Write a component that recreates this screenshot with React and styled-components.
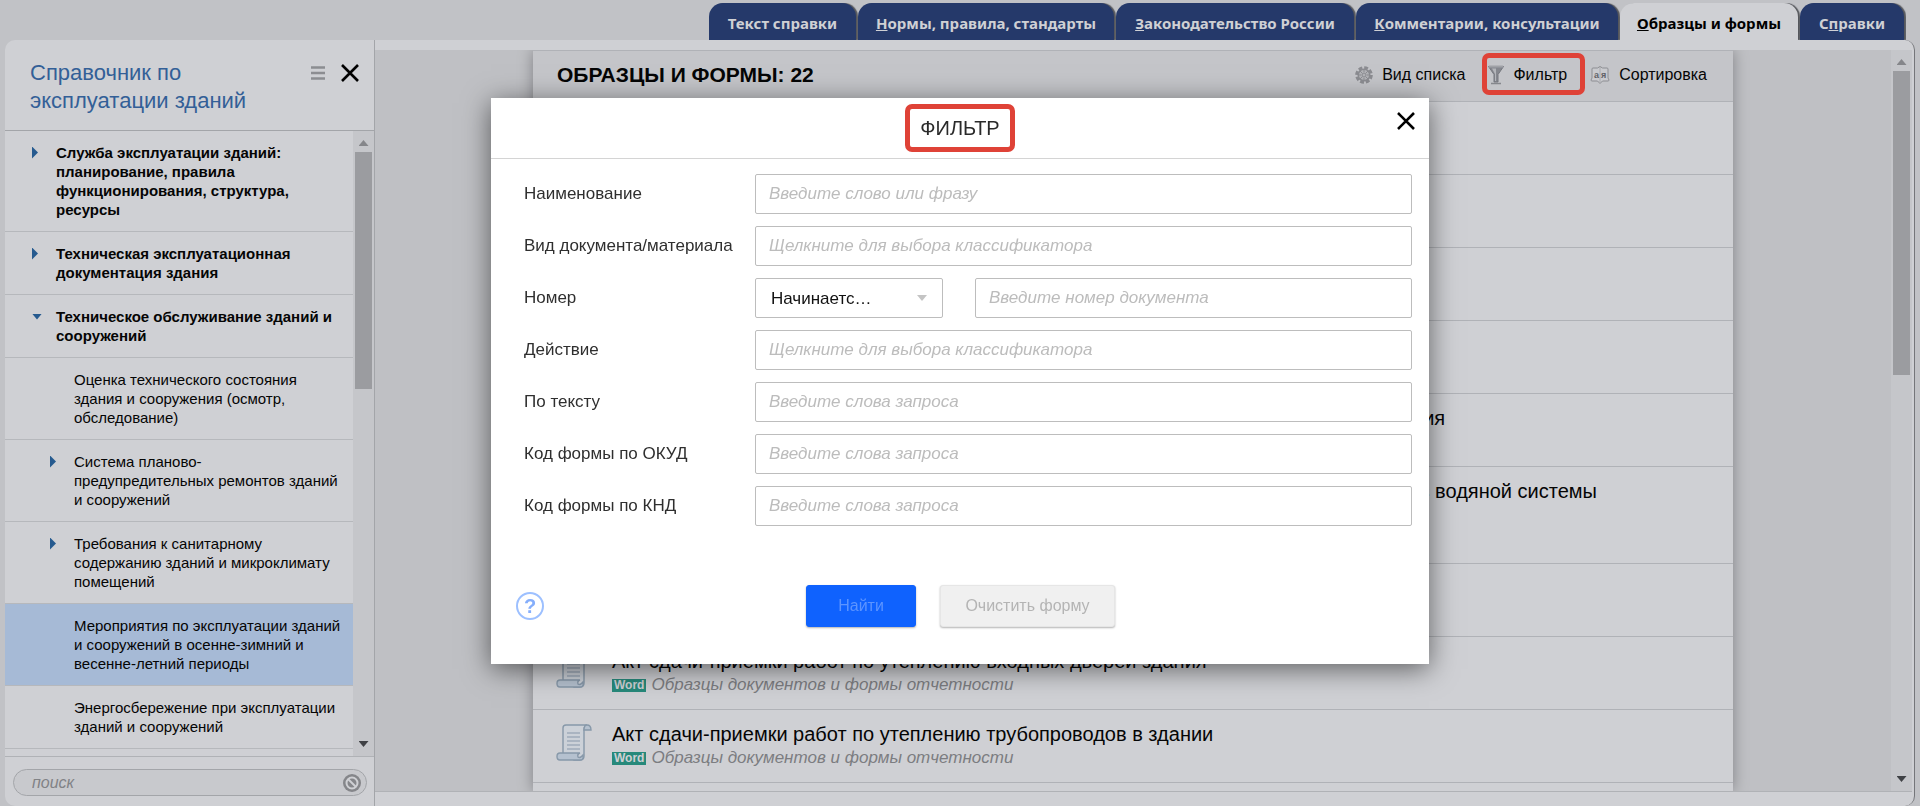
import React from 'react'
import styled, { createGlobalStyle } from 'styled-components'

const GlobalStyle = createGlobalStyle`
    *{
        box-sizing: border-box;
    }
    body{
        margin: 0;
        overflow: hidden;
        background: #c1c2c6;
        font-family: "Liberation Sans", Arial, sans-serif;
        color: #050505;
    }
    button, input, select{
        font-family: inherit;
    }
    h1, h2, ul, p{
        margin: 0;
        padding: 0;
    }
`

const tabs = [
    { before: 'Текст справки', width: 147 },
    { key: 'Н', after: 'ормы, правила, стандарты', width: 256 },
    { key: 'З', after: 'аконодательство России', width: 238 },
    { key: 'К', after: 'омментарии, консультации', width: 262 },
    { key: 'О', after: 'бразцы и формы', width: 178, active: true },
    { before: 'С', key: 'п', after: 'равки', width: 104 },
]

const sections = [
    { title: 'Служба эксплуатации зданий: планирование, правила функционирования, структура, ресурсы', level: 1, arrow: 'right' },
    { title: 'Техническая эксплуатационная документация здания', level: 1, arrow: 'right' },
    { title: 'Техническое обслуживание зданий и сооружений', level: 1, arrow: 'down' },
    { title: 'Оценка технического состояния здания и сооружения (осмотр, обследование)', level: 2 },
    { title: 'Система планово-предупредительных ремонтов зданий и сооружений', level: 2, arrow: 'right' },
    { title: 'Требования к санитарному содержанию зданий и микроклимату помещений', level: 2, arrow: 'right' },
    { title: 'Мероприятия по эксплуатации зданий и сооружений в осенне-зимний и весенне-летний периоды', level: 2, active: true },
    { title: 'Энергосбережение при эксплуатации зданий и сооружений', level: 2 },
]

const documents = [
    'План подготовки здания к зиме',
    'Паспорт готовности здания',
    'Акт готовности здания',
    'Акт весеннего осмотра здания',
    'Акт готовности сетей отопления и водоснабжения к эксплуатации в зимнее время здания',
    'Акты промывки и гидравлического испытания трубопроводов и отопительных приборов водяной системы отопления здания',
    'Акт осмотра кровли здания',
    'Акт сдачи-приемки работ по утеплению входных дверей здания',
    'Акт сдачи-приемки работ по утеплению трубопроводов в здании',
    'Акт сдачи-приемки работ по утеплению чердака',
]

const fields = [
    { id: 'name', label: 'Наименование', placeholder: 'Введите слово или фразу' },
    { id: 'kind', label: 'Вид документа/материала', placeholder: 'Щелкните для выбора классификатора' },
    { id: 'number', label: 'Номер', placeholder: 'Введите номер документа', select: true },
    { id: 'status', label: 'Действие', placeholder: 'Щелкните для выбора классификатора' },
    { id: 'text', label: 'По тексту', placeholder: 'Введите слова запроса' },
    { id: 'okud', label: 'Код формы по ОКУД', placeholder: 'Введите слова запроса' },
    { id: 'knd', label: 'Код формы по КНД', placeholder: 'Введите слова запроса' },
]

const CrossIcon = () => (
    <svg width="18" height="18" viewBox="0 0 18 18">
        <path d="M1 1 L17 17 M17 1 L1 17" stroke="#000" strokeWidth="2.6" fill="none" />
    </svg>
)

const ScrollIcon = () => (
    <svg width="36" height="37" viewBox="0 0 36 37" fill="#b5c1cf" stroke="#8798a9" strokeWidth="1.4">
        <path d="M7 29 V4 Q7 1 10 1 H31 Q28 2 28 6 V32 Q28 36 24 36 H18 Z" fill="#ccd1d8" />
        <path d="M28 6 Q28 1 31 1 Q35 1 35 6 Z" />
        <path d="M24 36 H4 Q1 36 1 32.500 Q1 29 4 29 H24 Q21 30 22 33 Q23 34 25 33 L27 31 Q28 36 24 36 Z" />
        <path d="M11 9 H24 M11 13 H24 M11 17 H24 M11 21 H24 M11 25 H24" strokeWidth="1.200" />
    </svg>
)

const GearIcon = () => (
    <svg width="18" height="18" viewBox="0 0 18 18" fill="none" stroke="#8b8c91">
        <circle cx="9" cy="9" r="7.300" strokeWidth="3" strokeDasharray="3.800 1.930" />
        <circle cx="9" cy="9" r="5.800" strokeWidth="1.500" fill="#b2b3b7" />
        <circle cx="9" cy="9" r="2" />
        <path d="M9 3.500 V6 M9 12 V14.500 M3.500 9 H6 M12 9 H14.500 M5 5 L7 7 M11 11 L13 13 M13 5 L11 7 M5 13 L7 11" />
    </svg>
)

const FunnelIcon = () => (
    <svg width="16" height="20" viewBox="0 0 16 20">
        <path d="M0.500 1.500 H15.500 L10 9.500 V17 H6 V9.500 Z" fill="#85878e" stroke="#75777e" />
        <path d="M4 3.500 H8 L8 8.500 V16 H7 V9 Z" fill="#b3b5ba" />
        <path d="M1 1.500 H15" stroke="#a0a2a7" strokeWidth="2" />
        <path d="M3 18.500 H13" stroke="#85878c" strokeWidth="1.500" />
    </svg>
)

const SortIcon = () => (
    <svg width="20" height="20" viewBox="0 0 20 20">
        <path d="M3 3 H7.500 L10 1.500 L12.500 3 H17 Q18 3 18 4 V13 L19 15 Q19 16 18 16 H12.500 L10 18.500 L7.500 16 H2 Q1 16 1 15 L2 13 V4 Q2 3 3 3 Z" fill="#c9cace" stroke="#8c8d92" />
        <path d="M10 2 V18" stroke="#a9aaae" />
        <text x="4" y="13" fontSize="9" fontWeight="bold" fill="#606166">a</text>
        <text x="11" y="13" fontSize="9" fontWeight="bold" fill="#606166">я</text>
    </svg>
)

const BanIcon = () => (
    <svg width="18" height="18" viewBox="0 0 18 18">
        <circle cx="9" cy="9" r="9" fill="#85868a" />
        <circle cx="9" cy="9" r="5.500" fill="none" stroke="#cfd0d4" strokeWidth="2" />
        <path d="M5 5 L13 13" stroke="#cfd0d4" strokeWidth="2" />
    </svg>
)

const ScrollBar = ({ size }) => (
    <Track>
        <Arrow $dir="up" $color="#85868a" />
        <Thumb $size={size} />
        <Arrow $dir="down" $color="#3f4145" />
    </Track>
)

const Sidebar = () => (
    <Aside>
        <SidebarHeader>
            <SidebarTitle>Справочник по эксплуатации зданий</SidebarTitle>
            <IconButton aria-label="Меню">
                <svg width="14" height="14" viewBox="0 0 14 14">
                    <path d="M0 1.500 H14 M0 7 H14 M0 12.500 H14" stroke="#8c8d91" strokeWidth="2.600" />
                </svg>
            </IconButton>
            <IconButton aria-label="Закрыть"><CrossIcon /></IconButton>
        </SidebarHeader>
        <Contents>
            <SectionList>
                {sections.map(section => (
                    <Section key={section.title} $level={section.level} $active={section.active}>
                        <ArrowCell>{section.arrow && <Arrow $dir={section.arrow} $color="#265a8f" />}</ArrowCell>
                        <SectionLink href="#">{section.title}</SectionLink>
                    </Section>
                ))}
            </SectionList>
            <ScrollBar size={39} />
        </Contents>
        <SearchArea>
            <SearchBox>
                <SearchInput type="text" aria-label="поиск" placeholder="поиск" />
                <IconButton aria-label="Очистить"><BanIcon /></IconButton>
            </SearchBox>
        </SearchArea>
    </Aside>
)

const FilterDialog = () => (
    <Overlay>
        <Dialog role="dialog" aria-labelledby="filter-title">
            <DialogHeader>
                <DialogTitle id="filter-title">ФИЛЬТР</DialogTitle>
                <DialogClose aria-label="Закрыть"><CrossIcon /></DialogClose>
            </DialogHeader>
            <Form onSubmit={e => e.preventDefault()}>
                {fields.map(field => (
                    <Field key={field.id}>
                        <label htmlFor={field.id}>{field.label}</label>
                        <Controls>
                            {field.select && (
                                <SelectBox>
                                    <select aria-label="Условие">
                                        <option>Начинаетс…</option>
                                    </select>
                                    <Arrow $dir="down" $color="#c4c4c4" />
                                </SelectBox>
                            )}
                            <Input id={field.id} type="text" placeholder={field.placeholder} />
                        </Controls>
                    </Field>
                ))}
                <Actions>
                    <HelpButton type="button" aria-label="Помощь">?</HelpButton>
                    <ActionButton type="submit" $primary>Найти</ActionButton>
                    <ActionButton type="reset">Очистить форму</ActionButton>
                </Actions>
            </Form>
        </Dialog>
    </Overlay>
)

const App = () => {
    return (
        <Page>
            <GlobalStyle />
            <Tabs>
                {tabs.map(tab => (
                    <Tab key={tab.after || tab.before} href="#" $width={tab.width} $active={tab.active}>
                        {tab.before}{tab.key && <u>{tab.key}</u>}{tab.after}
                    </Tab>
                ))}
            </Tabs>
            <Panel>
                <Sidebar />
                <Content>
                    <Viewport>
                        <Paper>
                            <Toolbar>
                                <h1>ОБРАЗЦЫ И ФОРМЫ: 22</h1>
                                <ToolButton><GearIcon />Вид списка</ToolButton>
                                <ToolButton $marked><FunnelIcon />Фильтр</ToolButton>
                                <ToolButton><SortIcon />Сортировка</ToolButton>
                            </Toolbar>
                            <ul>
                                {documents.map(title => (
                                    <Row key={title}>
                                        <ScrollIcon />
                                        <div>
                                            <RowTitle href="#">{title}</RowTitle>
                                            <RowInfo><Badge>Word</Badge>Образцы документов и формы отчетности</RowInfo>
                                        </div>
                                    </Row>
                                ))}
                            </ul>
                        </Paper>
                        <ScrollBar size={42} />
                    </Viewport>
                </Content>
            </Panel>
            <FilterDialog />
        </Page>
    )
}

const Page = styled.div`
    height: 100vh;
    padding: 3px 5px 0;
    display: flex;
    flex-direction: column;
`

const Tabs = styled.nav`
    display: flex;
    justify-content: flex-end;
    gap: 2px;
    padding-right: 11px;
`

const Tab = styled.a`
    width: ${({ $width }) => $width}px;
    height: 37px;
    padding-top: 3px;
    display: flex;
    align-items: center;
    justify-content: center;
    border-radius: 14px 14px 0 0;
    background: ${({ $active }) => $active ? '#cfd0d4' : '#25396a'};
    box-shadow: 2px 0 1px #55575c;
    clip-path: inset(0 -2px 0 0);
    color: ${({ $active }) => $active ? '#000' : '#cfd0d4'};
    font-family: "Noto Sans", sans-serif;
    font-size: 15px;
    font-weight: bold;
    text-decoration: none;
    white-space: pre;
`

const Panel = styled.div`
    flex: 1;
    min-height: 0;
    display: flex;
    background: #cfd0d4;
    border-right: 1px solid #75767a;
    border-radius: 10px;
    overflow: hidden;
`

const Aside = styled.aside`
    width: 370px;
    flex-shrink: 0;
    display: flex;
    flex-direction: column;
    border-right: 1px solid #a3a5a9;
`

const SidebarHeader = styled.header`
    height: 91px;
    padding: 19px 15px 0 25px;
    display: flex;
    align-items: flex-start;
    gap: 16px;
    border-bottom: 1px solid #a3a5a9;
    &>button{
        margin-top: 4px;
    }
`

const SidebarTitle = styled.h2`
    flex: 1;
    color: #335f97;
    font-size: 22px;
    font-weight: normal;
    line-height: 28px;
`

const IconButton = styled.button`
    height: 20px;
    padding: 0;
    display: flex;
    align-items: center;
    background: transparent;
    border: none;
    cursor: pointer;
`

const Contents = styled.div`
    flex: 1;
    min-height: 0;
    display: flex;
`

const SectionList = styled.ul`
    flex: 1;
    list-style: none;
    overflow: hidden;
`

const Section = styled.li`
    padding: 12px 12px 12px ${({ $level }) => $level === 1 ? 27 : 45}px;
    display: flex;
    border-bottom: 1px solid #b6b8bc;
    background: ${({ $active }) => $active ? '#a6bad6' : 'transparent'};
    font-size: 15px;
    font-weight: ${({ $level }) => $level === 1 ? 'bold' : 'normal'};
    line-height: 19px;
`

const ArrowCell = styled.span`
    width: 24px;
    height: 19px;
    flex-shrink: 0;
    display: flex;
    align-items: center;
`

const SectionLink = styled.a`
    color: #050505;
    text-decoration: none;
`

const arrowShapes = {
    up: 'polygon(50% 0, 100% 100%, 0 100%)',
    down: 'polygon(0 0, 100% 0, 50% 100%)',
    right: 'polygon(0 0, 100% 50%, 0 100%)',
}

const Arrow = styled.span`
    width: ${({ $dir }) => $dir === 'right' ? 6 : 10}px;
    height: ${({ $dir }) => $dir === 'right' ? 12 : 6}px;
    flex-shrink: 0;
    background: ${({ $color }) => $color};
    clip-path: ${({ $dir }) => arrowShapes[$dir]};
`

const Track = styled.div`
    width: 21px;
    flex-shrink: 0;
    padding: 9px 2px;
    display: flex;
    flex-direction: column;
    align-items: center;
    background: #c5c6ca;
    &>:last-child{
        margin-top: auto;
    }
`

const Thumb = styled.div`
    width: 100%;
    height: ${({ $size }) => $size}%;
    margin-top: 6px;
    background: #9b9ca0;
`

const SearchArea = styled.div`
    height: 50px;
    padding: 12px 7px 0 8px;
    border-top: 1px solid #b0b2b6;
`

const SearchBox = styled.div`
    height: 27px;
    padding: 0 5px 0 18px;
    display: flex;
    align-items: center;
    background: #c8c9cd;
    border: 1px solid #a3a5a9;
    border-radius: 14px;
`

const SearchInput = styled.input`
    flex: 1;
    min-width: 0;
    padding: 0;
    background: transparent;
    border: none;
    outline: none;
    font-size: 16px;
    font-style: italic;
    &::placeholder{
        color: #818286;
    }
`

const Content = styled.main`
    flex: 1;
    min-width: 0;
    padding: 10px 2px 14px 0;
    display: flex;
`

const Viewport = styled.div`
    flex: 1;
    min-width: 0;
    display: flex;
    background: #bfc0c4;
    border-bottom: 1px solid #b0b2b6;
    overflow: hidden;
`

const Paper = styled.section`
    flex: 1;
    max-width: 1200px;
    margin: 0 auto;
    background: #cfd0d4;
    box-shadow: 0 0 14px #808185;
`

const Toolbar = styled.header`
    height: 52px;
    padding: 0 26px 2px 24px;
    display: flex;
    align-items: center;
    gap: 23px;
    background: #c4c5c9;
    border: solid #b0b2b7;
    border-width: 1px 0;
    &>h1{
        flex: 1;
        font-size: 21px;
    }
`

const ToolButton = styled.button`
    position: relative;
    padding: 0;
    display: flex;
    align-items: center;
    gap: 9px;
    background: transparent;
    border: none;
    color: #050505;
    font-size: 16px;
    cursor: pointer;
    &::after{
        content: '';
        display: ${({ $marked }) => $marked ? 'block' : 'none'};
        position: absolute;
        inset: -12px -18px -10px -6px;
        border: 5px solid #df4237;
        border-radius: 7px;
    }
`

const Row = styled.li`
    padding: 12px 120px 12px 23px;
    display: flex;
    gap: 20px;
    border-bottom: 1px solid #b0b2b7;
    &>svg{
        flex-shrink: 0;
        margin-top: 2px;
    }
`

const RowTitle = styled.a`
    display: block;
    color: #050505;
    font-size: 20px;
    line-height: 24px;
    text-decoration: none;
`

const RowInfo = styled.p`
    display: flex;
    align-items: center;
    gap: 5px;
    color: #7c7d81;
    font-size: 17px;
    font-style: italic;
    line-height: 24px;
`

const Badge = styled.span`
    height: 13px;
    padding: 0 2px;
    background: #27897b;
    color: #cfd0d4;
    font-size: 12px;
    font-style: normal;
    font-weight: bold;
    line-height: 13px;
`

const Overlay = styled.div`
    position: fixed;
    inset: 0;
    padding-top: 98px;
    display: flex;
    align-items: flex-start;
    justify-content: center;
`

const Dialog = styled.div`
    width: 938px;
    max-width: 100%;
    background: #fff;
    box-shadow: 0 5px 26px rgba(0, 0, 0, .55);
`

const DialogHeader = styled.header`
    position: relative;
    height: 61px;
    padding-top: 6px;
    display: flex;
    align-items: flex-start;
    justify-content: center;
    border-bottom: 1px solid #d4d4d4;
`

const DialogTitle = styled.h2`
    height: 48px;
    padding: 0 10px;
    border: 5px solid #df4237;
    border-radius: 7px;
    color: #2a2a2a;
    font-size: 20px;
    font-weight: normal;
    line-height: 38px;
`

const DialogClose = styled(IconButton)`
    position: absolute;
    top: 13px;
    right: 14px;
`

const Form = styled.form`
    padding: 15px 17px 37px 33px;
    display: flex;
    flex-direction: column;
    gap: 12px;
`

const Field = styled.div`
    display: flex;
    align-items: center;
    color: #2f2f2f;
    font-size: 17px;
    &>label{
        width: 231px;
        flex-shrink: 0;
    }
`

const Controls = styled.div`
    flex: 1;
    display: flex;
    gap: 32px;
`

const Input = styled.input`
    flex: 1;
    min-width: 0;
    height: 40px;
    padding: 0 13px;
    border: 1px solid #bdbdbd;
    border-radius: 2px;
    outline: none;
    font-size: 17px;
    &::placeholder{
        color: #bcbcbc;
        font-style: italic;
    }
`

const SelectBox = styled.div`
    width: 188px;
    height: 40px;
    padding: 0 15px;
    display: flex;
    align-items: center;
    border: 1px solid #bdbdbd;
    border-radius: 2px;
    &>select{
        flex: 1;
        appearance: none;
        padding: 0;
        background: transparent;
        border: none;
        outline: none;
        color: #111;
        font-size: 17px;
    }
`

const Actions = styled.div`
    margin-top: 47px;
    padding-right: 297px;
    display: flex;
    align-items: center;
    gap: 24px;
`

const HelpButton = styled.button`
    width: 28px;
    height: 28px;
    margin: 0 auto 0 -8px;
    padding: 0;
    background: transparent;
    border: 2px solid #9dc0ff;
    border-radius: 50%;
    color: #85aefb;
    font-size: 20px;
    font-weight: bold;
    line-height: 24px;
    cursor: pointer;
`

const ActionButton = styled.button`
    height: 42px;
    padding: 0;
    width: ${({ $primary }) => $primary ? 110 : 175}px;
    background: ${({ $primary }) => $primary ? '#0f62fe' : '#f0f0f0'};
    border: 1px solid ${({ $primary }) => $primary ? '#0f62fe' : '#e6e6e6'};
    border-radius: 3px;
    box-shadow: 0 1px 2px rgba(0, 0, 0, .3);
    color: ${({ $primary }) => $primary ? '#5c94ff' : '#b4b4b4'};
    font-size: 16px;
    cursor: pointer;
`

export default App
